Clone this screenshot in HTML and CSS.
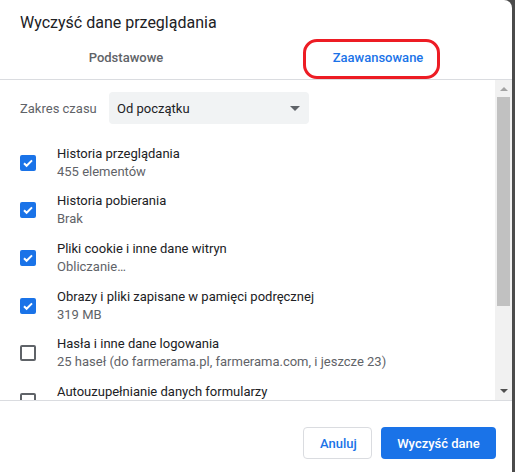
FILE: index.html
```html
<!DOCTYPE html>
<html lang="pl">
<head>
  <meta charset="UTF-8">
  <title>Wyczyść dane przeglądania</title>
  <link rel="stylesheet" href="styles.css">
</head>
<body>
  <div class="dialog">
    <div class="dialog-title">Wyczyść dane przeglądania</div>
    <div class="tabs">
      <div class="tab">Podstawowe</div>
      <div class="tab tab-selected">Zaawansowane</div>
      <div class="marker"></div>
    </div>
    <div class="body-wrap">
      <div class="body">
        <div class="range-row">
          <span class="range-label">Zakres czasu</span>
          <div class="select">
            <span>Od początku</span>
            <span class="select-arrow"></span>
          </div>
        </div>
        <div class="item">
          <span class="box checked"><svg viewBox="0 0 16 16" width="16" height="16"><path d="M4 8.2l2.6 2.6L12 5.4" fill="none" stroke="#fff" stroke-width="2"/></svg></span>
          <div class="item-text">
            <div class="item-title">Historia przeglądania</div>
            <div class="item-sub">455 elementów</div>
          </div>
        </div>
        <div class="item">
          <span class="box checked"><svg viewBox="0 0 16 16" width="16" height="16"><path d="M4 8.2l2.6 2.6L12 5.4" fill="none" stroke="#fff" stroke-width="2"/></svg></span>
          <div class="item-text">
            <div class="item-title">Historia pobierania</div>
            <div class="item-sub">Brak</div>
          </div>
        </div>
        <div class="item">
          <span class="box checked"><svg viewBox="0 0 16 16" width="16" height="16"><path d="M4 8.2l2.6 2.6L12 5.4" fill="none" stroke="#fff" stroke-width="2"/></svg></span>
          <div class="item-text">
            <div class="item-title">Pliki cookie i inne dane witryn</div>
            <div class="item-sub">Obliczanie…</div>
          </div>
        </div>
        <div class="item">
          <span class="box checked"><svg viewBox="0 0 16 16" width="16" height="16"><path d="M4 8.2l2.6 2.6L12 5.4" fill="none" stroke="#fff" stroke-width="2"/></svg></span>
          <div class="item-text">
            <div class="item-title">Obrazy i pliki zapisane w pamięci podręcznej</div>
            <div class="item-sub">319 MB</div>
          </div>
        </div>
        <div class="item">
          <span class="box"></span>
          <div class="item-text">
            <div class="item-title">Hasła i inne dane logowania</div>
            <div class="item-sub">25 haseł (do farmerama.pl, farmerama.com, i jeszcze 23)</div>
          </div>
        </div>
        <div class="item">
          <span class="box"></span>
          <div class="item-text">
            <div class="item-title">Autouzupełnianie danych formularzy</div>
            <div class="item-sub">&nbsp;</div>
          </div>
        </div>
      </div>
      <div class="scrollbar">
        <span class="sb-up"></span>
        <div class="sb-track"><div class="sb-thumb"></div></div>
        <span class="sb-down"></span>
      </div>
    </div>
    <div class="buttons">
      <button class="btn btn-cancel">Anuluj</button>
      <button class="btn btn-action">Wyczyść dane</button>
    </div>
  </div>
</body>
</html>
```

FILE: styles.css
```css
* {
  margin: 0;
  padding: 0;
  box-sizing: border-box;
}
body {
  font-family: Roboto, "Liberation Sans", Arial, sans-serif;
  background: #4b4b4b;
  width: 515px;
  height: 472px;
  overflow: hidden;
  color: #202124;
}
.dialog {
  width: 512px;
  height: 472px;
  background: #fff;
  border-top-right-radius: 8px;
  display: flex;
  flex-direction: column;
}
.dialog-title {
  font-size: 16px;
  line-height: 22px;
  padding: 12px 20px 0;
  height: 36px;
}
.tabs {
  position: relative;
  display: flex;
  height: 44px;
  border-bottom: 1px solid #dadce0;
  padding-right: 8px;
}
.tab {
  flex: 1;
  text-align: center;
  font-size: 13px;
  font-weight: 500;
  color: #5f6368;
  line-height: 44px;
  padding-bottom: 1px;
}
.tab-selected { color: #1a73e8; }
/* czerwona ramka wokół zakładki */
.marker {
  position: absolute;
  left: 303px;
  top: 3px;
  width: 137px;
  height: 40px;
  border: 3.5px solid #ed1c24;
  border-radius: 14px;
}
.body-wrap {
  display: flex;
  height: 321px;
  border-bottom: 1px solid #dadce0;
}
.body {
  flex: 1;
  overflow: hidden;
  padding: 12px 0 0 20px;
}
.range-row {
  display: flex;
  align-items: center;
  height: 32px;
  margin-bottom: 15px;
}
.range-label {
  font-size: 13px;
  color: #5f6368;
  width: 89px;
}
.select {
  width: 200px;
  height: 32px;
  background: #f1f3f4;
  border-radius: 4px;
  display: flex;
  align-items: center;
  justify-content: space-between;
  padding: 0 9px 0 8px;
  font-size: 13px;
}
.select-arrow {
  width: 0;
  height: 0;
  border-left: 5px solid transparent;
  border-right: 5px solid transparent;
  border-top: 5px solid #5f6368;
}
.item {
  display: flex;
  align-items: center;
  padding: 5.8px 0;
}
.box {
  width: 16px;
  height: 16px;
  border: 2px solid #5f6368;
  border-radius: 2px;
  margin-right: 21px;
  flex-shrink: 0;
  position: relative;
}
.box.checked {
  background: #1a73e8;
  border-color: #1a73e8;
}
.box svg {
  position: absolute;
  left: -2px;
  top: -2px;
}
.item-text {
  font-size: 13px;
  line-height: 18px;
  white-space: nowrap;
}
.item-sub { color: #5f6368; }
.scrollbar {
  width: 17px;
  background: #f1f1f1;
  display: flex;
  flex-direction: column;
  align-items: center;
}
.sb-up, .sb-down {
  width: 0;
  height: 0;
  border-left: 4px solid transparent;
  border-right: 4px solid transparent;
}
.sb-up {
  border-bottom: 4px solid #a3a3a3;
  margin: 7px 0 6px;
}
.sb-down {
  border-top: 4px solid #505050;
  margin: 6px 0 7px;
}
.sb-track {
  flex: 1;
  width: 100%;
  padding: 0 2px;
}
.sb-thumb {
  height: 209px;
  background: #c1c1c1;
}
.buttons {
  display: flex;
  justify-content: flex-end;
  gap: 9px;
  padding: 26px 16px 0;
}
.btn {
  font-family: inherit;
  font-size: 13px;
  font-weight: 500;
  height: 32px;
  border-radius: 4px;
  padding: 0 16px;
  cursor: pointer;
}
.btn-cancel {
  background: #fff;
  color: #1a73e8;
  border: 1px solid #dadce0;
  width: 69px;
}
.btn-action {
  background: #1a73e8;
  color: #fff;
  border: none;
  width: 115px;
}
```
